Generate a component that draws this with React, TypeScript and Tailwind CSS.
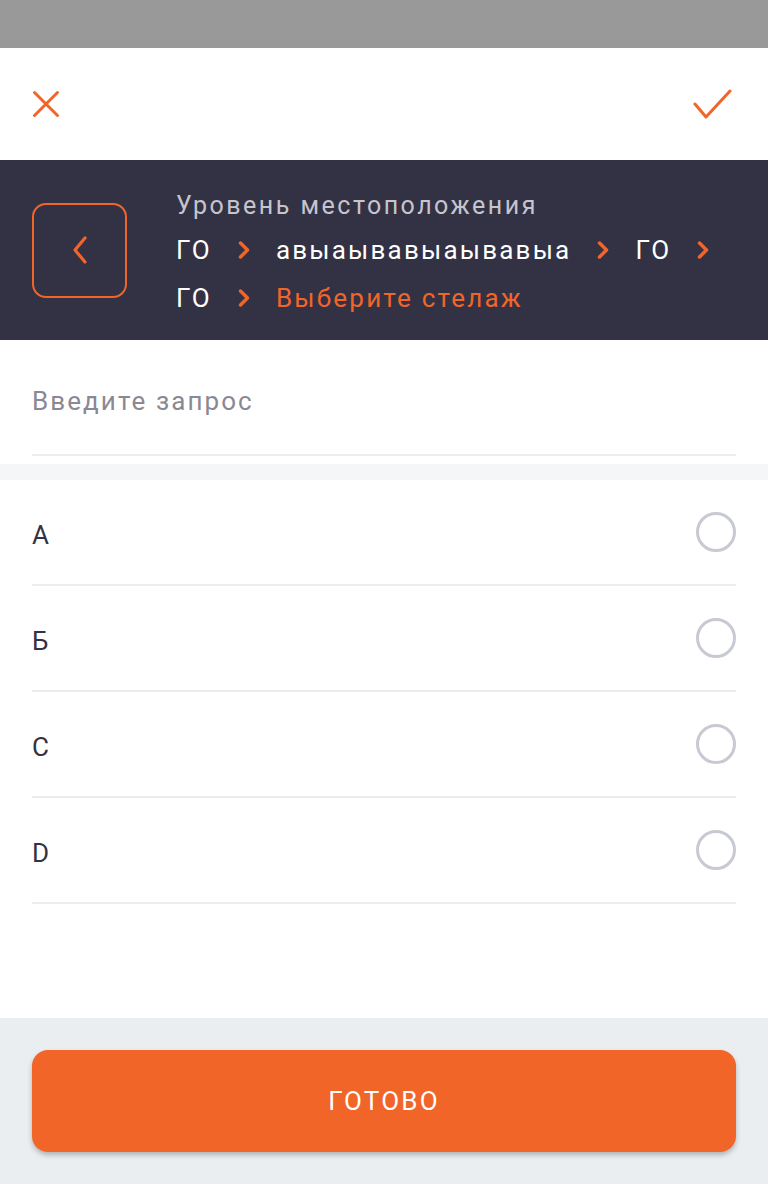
import { Fragment } from 'react'

const crumbs = ['ГО', 'авыаывавыаывавыа', 'ГО', 'ГО']
const items = ['A', 'Б', 'C', 'D']

function Chevron({ className }: { className?: string }) {
  return (
    <svg viewBox="0 0 14 20" className={className} fill="none">
      <path d="M3.5 3l7 7-7 7" stroke="#f26529" strokeWidth="3.5" strokeLinecap="round" strokeLinejoin="round" />
    </svg>
  )
}

export default function App() {
  return (
    <div className="flex flex-col min-h-[1184px] w-[768px] bg-white" style={{ fontFamily: 'Roboto, "Noto Sans", sans-serif' }}>
      <div className="h-12 bg-[#999999]" />

      <div className="h-28 flex items-center justify-between pl-[32px] pr-[35px]">
        <svg viewBox="0 0 28 28" className="w-7 h-7" fill="none">
          <path d="M2.5 2.5l23 23M25.5 2.5l-23 23" stroke="#f26529" strokeWidth="3" strokeLinecap="round" />
        </svg>
        <svg viewBox="0 0 41 30" className="w-[41px] h-[30px]" fill="none">
          <path d="M3 15l11 13L38 2" stroke="#f26529" strokeWidth="3" strokeLinecap="round" strokeLinejoin="round" />
        </svg>
      </div>

      <div className="h-[180px] bg-[#333244] flex items-center px-[32px]">
        <button className="w-[95px] h-[95px] shrink-0 rounded-[14px] border-2 border-[#f26529] flex items-center justify-center">
          <svg viewBox="0 0 16 28" className="w-4 h-7" fill="none">
            <path d="M13 2L3 14l10 12" stroke="#f26529" strokeWidth="3.2" strokeLinecap="round" strokeLinejoin="round" />
          </svg>
        </button>
        <div className="ml-[49px] mt-[6px] flex flex-col">
          <div className="text-[25px] leading-[32px] tracking-[0.1em] text-[#c6c5ce]">Уровень местоположения</div>
          <div className="mt-[10px] flex flex-wrap items-center gap-x-[25px] gap-y-[12px] text-[26px] leading-[36px] tracking-[0.085em] text-white">
            {crumbs.map((c, i) => (
              <Fragment key={i}>
                <span>{c}</span>
                <Chevron className="w-[14px] h-[20px]" />
              </Fragment>
            ))}
            <span className="text-[#f26529]">Выберите стелаж</span>
          </div>
        </div>
      </div>

      <div className="px-[32px]">
        <input
          placeholder="Введите запрос"
          className="w-full h-[116px] pt-[8px] border-b-2 border-[#e9eef2] text-[26px] tracking-[0.08em] text-[#333244] placeholder:text-[#8a8893] outline-none"
        />
      </div>
      <div className="h-4 mt-2 bg-[#f5f6f8]" />

      <div className="px-[32px] flex flex-col">
        {items.map((it) => (
          <div key={it} className="h-[106px] flex items-center justify-between border-b-2 border-[#e9eef2]">
            <span className="pt-[6px] text-[26px] tracking-[0.08em] text-[#333244]">{it}</span>
            <span className="w-10 h-10 rounded-full border-[3px] border-[#c8cad3]" />
          </div>
        ))}
      </div>

      <div className="flex-1" />

      <div className="h-[166px] bg-[#ebeef1] px-[32px] pt-[32px]">
        <button className="w-full h-[102px] rounded-2xl bg-[#f26529] text-white text-[26px] tracking-[0.085em] shadow-[0_3px_5px_rgba(0,0,0,0.25)]">
          ГОТОВО
        </button>
      </div>
    </div>
  )
}
